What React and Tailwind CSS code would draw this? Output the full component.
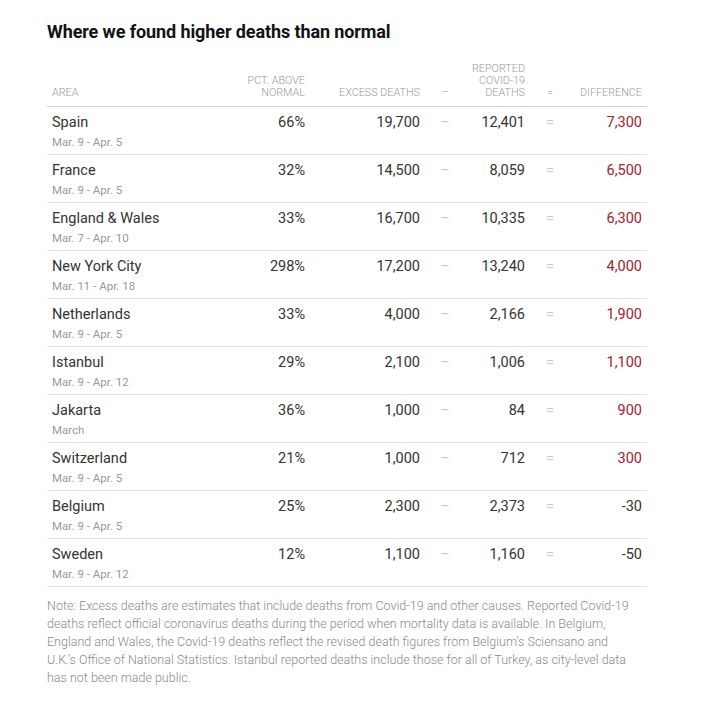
const rows = [
  { area: "Spain", dates: "Mar. 9 - Apr. 5", pct: "66%", excess: "19,700", reported: "12,401", diff: "7,300", pos: true },
  { area: "France", dates: "Mar. 9 - Apr. 5", pct: "32%", excess: "14,500", reported: "8,059", diff: "6,500", pos: true },
  { area: "England & Wales", dates: "Mar. 7 - Apr. 10", pct: "33%", excess: "16,700", reported: "10,335", diff: "6,300", pos: true },
  { area: "New York City", dates: "Mar. 11 - Apr. 18", pct: "298%", excess: "17,200", reported: "13,240", diff: "4,000", pos: true },
  { area: "Netherlands", dates: "Mar. 9 - Apr. 5", pct: "33%", excess: "4,000", reported: "2,166", diff: "1,900", pos: true },
  { area: "Istanbul", dates: "Mar. 9 - Apr. 12", pct: "29%", excess: "2,100", reported: "1,006", diff: "1,100", pos: true },
  { area: "Jakarta", dates: "March", pct: "36%", excess: "1,000", reported: "84", diff: "900", pos: true },
  { area: "Switzerland", dates: "Mar. 9 - Apr. 5", pct: "21%", excess: "1,000", reported: "712", diff: "300", pos: true },
  { area: "Belgium", dates: "Mar. 9 - Apr. 5", pct: "25%", excess: "2,300", reported: "2,373", diff: "-30", pos: false },
  { area: "Sweden", dates: "Mar. 9 - Apr. 12", pct: "12%", excess: "1,100", reported: "1,160", diff: "-50", pos: false },
];

const cols = "grid grid-cols-[183px_80px_115px_40px_65px_40px_77px]";

export default function App() {
  return (
    <div className="min-h-screen bg-white pt-[21px] pl-[47px]" style={{ fontFamily: "Roboto, 'Liberation Sans', sans-serif" }}>
      <h1 className="text-[18px] font-bold text-[#121212] leading-[22px] tracking-[-0.1px]">
        Where we found higher deaths than normal
      </h1>

      <div className="w-[600px] mt-[20px]">
        {/* Header */}
        <div className={`${cols} items-end text-[10.8px] leading-[12px] uppercase text-[#999] font-light border-b border-[#ccc] pb-[7px]`}>
          <div className="pl-[5px]">Area</div>
          <div className="text-right pr-[5px]">Pct. above<br />normal</div>
          <div className="text-right pr-[5px]">Excess deaths</div>
          <div className="text-center">–</div>
          <div className="text-right pr-[5px]">Reported<br />Covid-19<br />deaths</div>
          <div className="text-center">=</div>
          <div className="text-right pr-[5px]">Difference</div>
        </div>

        {/* Rows */}
        {rows.map((r) => (
          <div key={r.area} className={`${cols} h-[48px] border-b border-[#e2e2e2] pt-[7px] text-[14.5px] leading-[18px] text-[#333]`}>
            <div className="pl-[5px]">
              <div>{r.area}</div>
              <div className="text-[11.5px] leading-[16px] text-[#999] mt-[2px]">{r.dates}</div>
            </div>
            <div className="text-right pr-[5px]">{r.pct}</div>
            <div className="text-right pr-[5px]">{r.excess}</div>
            <div className="text-center text-[#ccc]">–</div>
            <div className="text-right pr-[5px]">{r.reported}</div>
            <div className="text-center text-[#ccc]">=</div>
            <div className={`text-right pr-[5px] ${r.pos ? "text-[#a3222c]" : "text-[#333]"}`}>{r.diff}</div>
          </div>
        ))}

        <p className="mt-[10px] text-[12.5px] leading-[18px] text-[#8a8a8a] font-light whitespace-nowrap">
          Note: Excess deaths are estimates that include deaths from Covid-19 and other causes. Reported Covid-19<br />
          deaths reflect official coronavirus deaths during the period when mortality data is available. In Belgium,<br />
          England and Wales, the Covid-19 deaths reflect the revised death figures from Belgium’s Sciensano and<br />
          U.K.’s Office of National Statistics. Istanbul reported deaths include those for all of Turkey, as city-level data<br />
          has not been made public.
        </p>
      </div>
    </div>
  );
}
